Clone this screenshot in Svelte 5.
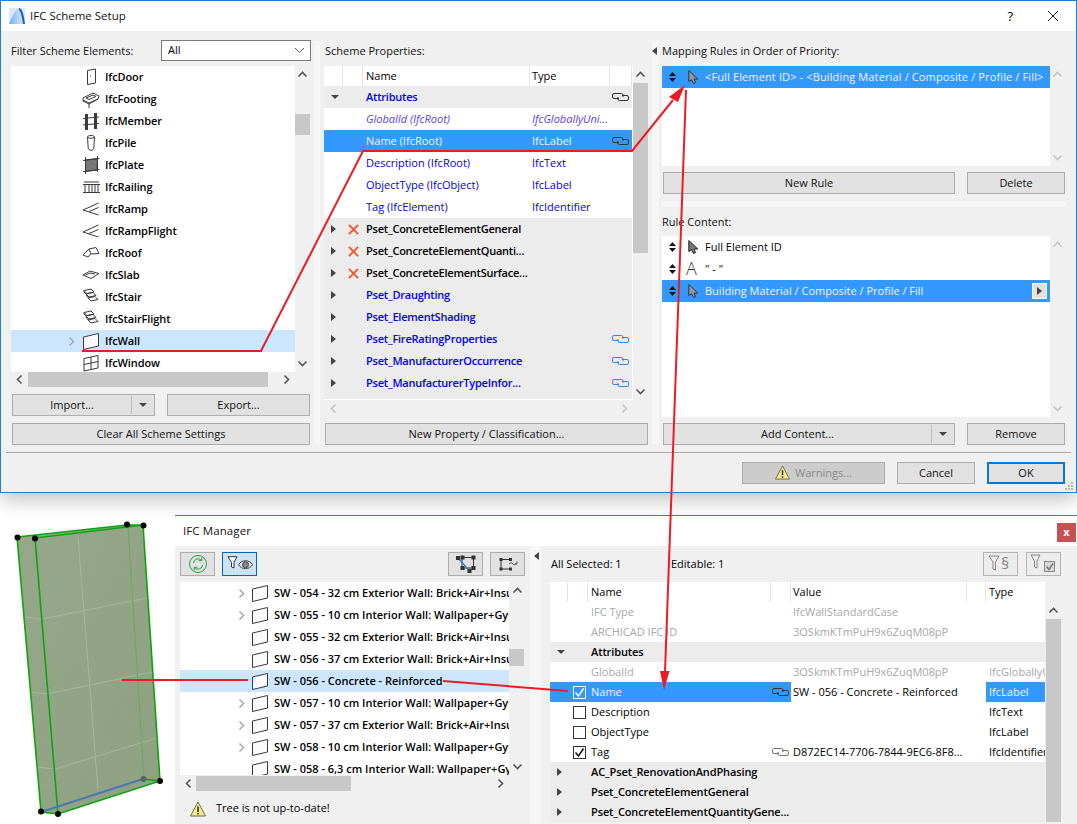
<script>
  // element list of the scheme dialog
  const elements = [
    ['IfcDoor', 'door'], ['IfcFooting', 'footing'], ['IfcMember', 'member'], ['IfcPile', 'pile'],
    ['IfcPlate', 'plate'], ['IfcRailing', 'railing'], ['IfcRamp', 'ramp'], ['IfcRampFlight', 'ramp'],
    ['IfcRoof', 'roof'], ['IfcSlab', 'slab'], ['IfcStair', 'stair'], ['IfcStairFlight', 'stair'],
    ['IfcWall', 'wall'], ['IfcWindow', 'window']
  ];

  const shapes = {
    door: [{ d: 'M5.5 2.5 13.5 1v14l-8 1.5z' }, { d: 'M8 8h1' }],
    footing: [{ d: 'M1 8 11 3l6 3-1 3-9 4-6-3z' }, { d: 'M4 8l7-3 3 1.5-7 3zM1 10v1l6 3 9-5M7 14v4' }],
    member: [{ d: 'M1 6.5 17 5M1 13l16-1.5' }, { d: 'M4.5 2v16M13.5 1v16', sw: 3 }],
    pile: [{ d: 'M5.5 3c0-2 7-2 7 0l-.7 11c-.3 3-5.300 3-5.600 0z' }, { d: 'M5.500 3.500c2 1 5 1 7 0' }],
    plate: [{ d: 'M3.500 4 15.500 2.500 15 14 3.500 15.500z', f: '#777' }, { d: 'M1 4.500 17.500 2.500M1 15.500 17.500 13.500M3.500 1v17M15.500 0v16' }],
    railing: [{ d: 'M2 4h15M1 6.500h17M3 6.500V14M7 6.500V14M10 6.500V14M13 6.500V14M16 6.500V14M1 14.500h17' }],
    ramp: [{ d: 'M16.500 3 1 10l15.500 5M7 11.500l9.500-4' }],
    roof: [{ d: 'M1 11 7 5l7-1.500 3 6-8.500.5-2.500 3z' }, { d: 'M9 10 7 5' }],
    slab: [{ d: 'M1 9 8 5l9 2.500-8 5z' }, { d: 'M3.500 9 8 7l5 1' }],
    stair: [{ d: 'M2 2.500 9 1l3 3-7 1.500zM4 6l7-1.500 3 3-7 1.500zM6 10l7-1.500 3 3-7 1.500zM2 2.500 2 4l3 3M4 7l3 4' }],
    wall: [{ d: 'M1.500 5 16.500 1.500V14L1.500 17.500z', f: '#fbfbfb' }],
    window: [{ d: 'M2 4.500 16 1.500V14L2 17zM9 3v12.500M2 10.500 16 7.500' }]
  };

  const schemeRows = [
    { name: 'Attributes', kind: 'group open', link: 'dark' },
    { name: 'GlobalId (IfcRoot)', type: 'IfcGloballyUni...', kind: 'req' },
    { name: 'Name (IfcRoot)', type: 'IfcLabel', kind: 'sel', link: 'dark' },
    { name: 'Description (IfcRoot)', type: 'IfcText', kind: 'attr' },
    { name: 'ObjectType (IfcObject)', type: 'IfcLabel', kind: 'attr' },
    { name: 'Tag (IfcElement)', type: 'IfcIdentifier', kind: 'attr' },
    { name: 'Pset_ConcreteElementGeneral', kind: 'group black', x: true },
    { name: 'Pset_ConcreteElementQuanti...', kind: 'group black', x: true },
    { name: 'Pset_ConcreteElementSurface...', kind: 'group black', x: true },
    { name: 'Pset_Draughting', kind: 'group' },
    { name: 'Pset_ElementShading', kind: 'group' },
    { name: 'Pset_FireRatingProperties', kind: 'group', link: 'blue' },
    { name: 'Pset_ManufacturerOccurrence', kind: 'group', link: 'blue' },
    { name: 'Pset_ManufacturerTypeInfor...', kind: 'group', link: 'blue' }
  ];

  const walls = [
    ['SW - 054 - 32 cm Exterior Wall: Brick+Air+Insulation', true],
    ['SW - 055 - 10 cm Interior Wall: Wallpaper+Gypsum', true],
    ['SW - 055 - 32 cm Exterior Wall: Brick+Air+Insulation', false],
    ['SW - 056 - 37 cm Exterior Wall: Brick+Air+Insulation', false],
    ['SW - 056 - Concrete - Reinforced', false, true],
    ['SW - 057 - 10 cm Interior Wall: Wallpaper+Gypsum', true],
    ['SW - 057 - 37 cm Exterior Wall: Brick+Air+Insulation', true],
    ['SW - 058 - 10 cm Interior Wall: Wallpaper+Gypsum', true],
    ['SW - 058 - 6,3 cm Interior Wall: Wallpaper+Gypsum', false]
  ];

  const managerRows = [
    { name: 'IFC Type', value: 'IfcWallStandardCase', kind: 'dim' },
    { name: 'ARCHICAD IFC ID', value: '3OSkmKTmPuH9x6ZuqM08pP', kind: 'dim' },
    { name: 'Attributes', kind: 'group', open: true },
    { name: 'GlobalId', value: '3OSkmKTmPuH9x6ZuqM08pP', type: 'IfcGloballyUniqueId', kind: 'dim' },
    { name: 'Name', value: 'SW - 056 - Concrete - Reinforced', type: 'IfcLabel', kind: 'sel', check: 'on', link: true },
    { name: 'Description', type: 'IfcText', check: 'off' },
    { name: 'ObjectType', type: 'IfcLabel', check: 'off' },
    { name: 'Tag', value: 'D872EC14-7706-7844-9EC6-8F8...', type: 'IfcIdentifier', check: 'on', link: true },
    { name: 'AC_Pset_RenovationAndPhasing', kind: 'group' },
    { name: 'Pset_ConcreteElementGeneral', kind: 'group' },
    { name: 'Pset_ConcreteElementQuantityGene...', kind: 'group' }
  ];
</script>

{#snippet chev(dir, cls = '')}
  <svg class="chev {dir} {cls}" width="11" height="11" viewBox="0 0 11 11"><path d="M1.500 7.500 5.500 3.500 9.500 7.500" /></svg>
{/snippet}

{#snippet vbar(top, height)}
  <div class="vbar">
    {@render chev('up')}
    <div class="thumb" style="top:{top}px;height:{height}px"></div>
    {@render chev('down')}
  </div>
{/snippet}

{#snippet hbar(left, width, dim)}
  <div class="hbar" class:dim>
    {@render chev('left')}
    {#if width}<div class="thumb" style="left:{left}px;width:{width}px"></div>{/if}
    {@render chev('right')}
  </div>
{/snippet}

{#snippet element(kind)}
  <svg class="eicon" width="18" height="18" viewBox="0 0 18 18">
    {#each shapes[kind] as s}
      <path d={s.d} fill={s.f ?? 'none'} stroke-width={s.sw ?? 1} />
    {/each}
  </svg>
{/snippet}

{#snippet link(tone)}
  <svg class="link {tone}" width="17" height="8" viewBox="0 0 17 8"><path d="M7 5.500H2A1.500 1.500 0 0 1 .5 4V2A1.500 1.500 0 0 1 2 .5H9.500A1.500 1.500 0 0 1 11 2V4M10 2.500H15A1.500 1.500 0 0 1 16.500 4V6A1.500 1.500 0 0 1 15 7.500H7.500A1.500 1.500 0 0 1 6 6V4" /></svg>
{/snippet}

{#snippet tri(dir)}
  <span class="tri {dir}"></span>
{/snippet}

{#snippet updown()}
  <svg class="updown" width="7" height="10" viewBox="0 0 7 10"><path d="M3.500 0 7 4H0zM0 6h7L3.500 10z" /></svg>
{/snippet}

{#snippet cursor()}
  <svg class="cursor" width="12" height="14" viewBox="0 0 12 14"><path d="M.8.5V11.500L3.500 9.800 5.500 13.500 7.500 12.700 6 9H9.800z" /></svg>
{/snippet}

{#snippet warn(size)}
  <svg width={size} height={size} viewBox="0 0 16 16"><path d="M8 1 15.500 15H.5z" fill="#f7e98a" stroke="#6d6a4a" /><path d="M8 5.500v5.500M8 12v1.500" stroke="#333" stroke-width="1.600" /></svg>
{/snippet}

<div class="page">
  <section class="setup">
    <header class="titlebar">
      <svg class="logo" width="16" height="16" viewBox="0 0 16 16">
        <defs>
          <linearGradient id="sail" x1="0" y1="0" x2="1" y2="0">
            <stop offset="0" stop-color="#6fb0f2" />
            <stop offset="1" stop-color="#d6e8fb" />
          </linearGradient>
        </defs>
        <rect width="16" height="16" fill="#dbe8f7" />
        <path d="M0 16C3 9 6 1 10 1 12 1 13 8 14 16z" fill="url(#sail)" />
        <path d="M10 1C12 1 14 8 15 16" fill="none" stroke="#1c5fb8" stroke-width="2" />
      </svg>
      <span class="wintitle">IFC Scheme Setup</span>
      <span class="help">?</span>
      <svg class="winclose" width="12" height="12" viewBox="0 0 12 12"><path d="M1 1l10 10M11 1 1 11" /></svg>
    </header>

    <div class="content">
      <div class="col col-filter">
        <div class="head">
          <span class="label">Filter Scheme Elements:</span>
          <div class="select"><span>All</span><svg width="11" height="7" viewBox="0 0 11 7"><path d="M1 1l4.500 4.500L10 1" /></svg></div>
        </div>
        <div class="listwrap filter-list">
          <div class="list">
            {#each elements as [name, kind]}
              <div class="erow" class:hi={name === 'IfcWall'}>
                {#if name === 'IfcWall'}{@render chev('right', 'pale')}{/if}
                {@render element(kind)}
                <b>{name}</b>
              </div>
            {/each}
          </div>
          {@render vbar(48, 21)}
        </div>
        {@render hbar(17, 240)}
        <div class="btnrow">
          <div class="btn split wide1"><span>Import...</span><i></i>{@render tri('down')}</div>
          <div class="btn wide1">Export...</div>
        </div>
        <div class="btn clear">Clear All Scheme Settings</div>
      </div>

      <div class="gutter plain"></div>

      <div class="col col-props">
        <div class="head"><span class="label shifted">Scheme Properties:</span></div>
        <div class="listwrap props-list">
          <div class="table">
            <div class="srow shead"><span></span><span></span><span>Name</span><span>Type</span><span></span></div>
            {#each schemeRows as r}
              <div class="srow {r.kind}">
                <span class="ar">
                  {#if r.kind.includes('open')}{@render tri('down')}{:else if r.kind.includes('group')}{@render tri('right')}{/if}
                </span>
                <span class="mk">
                  {#if r.x}<svg width="11" height="11" viewBox="0 0 12 12"><path d="M1 1l10 10M11 1 1 11" stroke="#f0552b" stroke-width="2" /></svg>{/if}
                </span>
                <span class="nm">{r.name}</span>
                <span class="ty">{r.type ?? ''}</span>
                <span class="lk">{#if r.link}{@render link(r.link)}{/if}</span>
              </div>
            {/each}
          </div>
          {@render vbar(17, 170)}
        </div>
        {@render hbar(0, 0, true)}
        <div class="btn newprop">New Property / Classification...</div>
      </div>

      <div class="gutter"><span class="tri left"></span></div>

      <div class="col col-rules">
        <div class="head"><span class="label">Mapping Rules in Order of Priority:</span></div>
        <div class="listwrap rules-list">
          <div class="list">
            <div class="rrow sel">{@render updown()}{@render cursor()}<span class="wide">&lt;Full Element ID&gt; - &lt;Building Material / Composite / Profile / Fill&gt;</span></div>
          </div>
          <div class="vbar faint">{@render chev('up')}{@render chev('down')}</div>
        </div>
        <div class="btnrow rulebtns">
          <div class="btn grow">New Rule</div>
          <div class="btn side">Delete</div>
        </div>
        <div class="strip"></div>
        <div class="label rc">Rule Content:</div>
        <div class="listwrap content-list">
          <div class="list">
            <div class="rrow">{@render updown()}{@render cursor()}<span>Full Element ID</span></div>
            <div class="rrow">{@render updown()}<span class="aicon">A</span><span>" - "</span></div>
            <div class="rrow sel">{@render updown()}{@render cursor()}<span>Building Material / Composite / Profile / Fill</span>
              <div class="more">{@render tri('right')}</div>
            </div>
          </div>
          <div class="vbar faint">{@render chev('up')}{@render chev('down')}</div>
        </div>
        <div class="btnrow rulebtns">
          <div class="btn grow split"><span>Add Content...</span><i></i>{@render tri('down')}</div>
          <div class="btn side">Remove</div>
        </div>
      </div>
    </div>

    <footer class="actions">
      <div class="btn act disabled warnbtn">{@render warn(15)}<span>Warnings...</span></div>
      <div class="btn act cancel">Cancel</div>
      <div class="btn act ok">OK</div>
      <svg class="grip" width="9" height="9" viewBox="0 0 9 9"><path d="M6 0h2v2H6zM3 3h2v2H3zM6 3h2v2H6zM0 6h2v2H0zM3 6h2v2H3zM6 6h2v2H6z" /></svg>
    </footer>
  </section>

  <div class="lower">
    <svg class="model" width="175" height="309" viewBox="0 515 175 309">
      <defs>
        <linearGradient id="conc" x1="0" y1="0" x2="1" y2="1">
          <stop offset="0" stop-color="#96a88a" />
          <stop offset="1" stop-color="#8da080" />
        </linearGradient>
        <filter id="mottle" x="0" y="0" width="1" height="1">
          <feTurbulence type="fractalNoise" baseFrequency="0.05 0.09" numOctaves="3" seed="4" />
          <feColorMatrix values="0 0 0 0 0.32  0 0 0 0 0.38  0 0 0 0 0.26  0.6 0 0 0 -0.22" />
          <feComposite in2="SourceGraphic" operator="in" />
        </filter>
      </defs>
      <path d="M17 537 127 525 143 525 160 781 58 814 41 812z" fill="url(#conc)" />
      <path d="M17 537 127 525 143 525 160 781 58 814 41 812z" fill="#000" filter="url(#mottle)" />
      <g class="joints">
        <path d="M25 617 42 619 147 598M32 692 47 694 152 672M38 767 55 769 157 738" />
        <path d="M78 537 98 790" />
      </g>
      <path class="backedge" d="M128 527 144 778" />
      <path class="edge" d="M17 537 127 525 143 525 160 781 58 814 41 812zM35 538 143 525M35 538 58 814M143 779 160 781" />
      <path class="baseline" d="M41 812 143 779" />
      <circle class="hidden-pt" cx="143.500" cy="779" r="3" />
      {#each [[17.500, 537.500], [35, 538.500], [127, 524.500], [143.500, 525.500], [160, 781], [41, 811.500], [58, 814]] as [cx, cy]}
        <circle {cx} {cy} r="3" />
      {/each}
    </svg>

    <section class="manager">
      <header class="mtitle">
        <span class="wintitle small">IFC Manager</span>
        <div class="mclose">x</div>
      </header>
      <div class="mbody">
        <div class="tree">
          <div class="tools">
            <div class="tool">
              <svg width="20" height="20" viewBox="0 0 20 20"><circle cx="10" cy="10" r="8.500" fill="none" stroke="#27a050" /><path d="M5.500 9a4.500 4.500 0 0 1 8-2.500M14.500 11a4.500 4.500 0 0 1-8 2.500M13.800 3.500v3.200h-3.200M6.200 16.500v-3.200h3.200" fill="none" stroke="#27a050" /></svg>
            </div>
            <div class="tool active">
              <svg width="30" height="18" viewBox="0 0 30 18"><path d="M3 1.700h9L9 7.500V13L6.500 12V7.500z" fill="#fff" stroke="#333" /><path d="M13.500 9.700c3-5.300 11-5.300 14 0-3 5.300-11 5.300-14 0z" fill="#d9e4ee" stroke="#444" /><circle cx="20.500" cy="9.700" r="3" fill="#888" stroke="#444" /></svg>
            </div>
            <div class="spacer"></div>
            <div class="tool">
              <svg width="22" height="20" viewBox="0 0 22 20"><path d="M7 3.500H18.500V14H7z" fill="none" stroke="#333" /><path d="M3 4 14.500 16.700" fill="none" stroke="#3b78d8" stroke-width="1.300" /><path d="M1 2h4v4H1zM5.500 1.500h4v4h-4zM16.500 1.500h4v4h-4zM5.500 12h4v4h-4zM16.500 12h4v4h-4zM12.500 15h4v4h-4z" fill="#333" /></svg>
            </div>
            <div class="tool">
              <svg width="22" height="18" viewBox="0 0 22 18"><path d="M4 4.500H13.500M4 4.500V14M4 14H13.500M13.500 4.500V6" fill="none" stroke="#333" /><path d="M2.500 3h3v3h-3zM12 3h3v3h-3zM2.500 12.500h3v3h-3zM12 12.500h3v3h-3z" fill="#333" /><path d="M12 9c1.500-1.500 3-1.500 4 0s2.500 1 4-.5M20 6.500V8.700H18" fill="none" stroke="#555" /></svg>
            </div>
          </div>
          <div class="listwrap tree-list">
            <div class="list">
              {#each walls as [label, expandable, hi]}
                <div class="wrow" class:hi>
                  <span class="slot">{#if expandable}{@render chev('right', 'pale')}{/if}</span>
                  {@render element('wall')}
                  <b>{label}</b>
                </div>
              {/each}
            </div>
            {@render vbar(67, 17)}
          </div>
          {@render hbar(16, 155)}
          <div class="notice">{@render warn(16)}<span>Tree is not up-to-date!</span></div>
        </div>

        <div class="gutter m"><span class="tri left"></span></div>

        <div class="props">
          <div class="summary">
            <span class="count">All Selected: 1</span>
            <span class="count">Editable: 1</span>
            <div class="spacer"></div>
            <div class="tool ghost">
              <svg width="28" height="20" viewBox="0 0 28 20"><path d="M2 2h10L8.500 8v8L6 15V8z" fill="none" stroke="#888" /><text x="14" y="15" class="sect">§</text></svg>
            </div>
            <div class="tool ghost">
              <svg width="28" height="20" viewBox="0 0 28 20"><path d="M1 1h9L7 7v7L4.500 13V7z" fill="none" stroke="#888" /><rect x="14.500" y="7.500" width="10" height="10" fill="#d8d8d8" stroke="#888" /><path d="M16.500 12.500l2.500 3 4-6" fill="none" stroke="#777" stroke-width="1.500" /></svg>
            </div>
          </div>
          <div class="ptable">
            <div class="pgrid">
              <div class="prow phead"><span></span><span></span><span class="nm">Name</span><span></span><span class="val">Value</span><span></span><span class="ty">Type</span></div>
              {#each managerRows as r}
                <div class="prow {r.kind ?? ''}">
                  <span class="ar">
                    {#if r.kind === 'group'}{@render tri(r.open ? 'down' : 'right')}{/if}
                  </span>
                  <span class="ck">
                    {#if r.check}
                      <span class="box">{#if r.check === 'on'}<svg width="11" height="11" viewBox="0 0 11 11"><path d="M1.500 5.500 4.500 9 9.500 1.500" /></svg>{/if}</span>
                    {/if}
                  </span>
                  <span class="nm">{r.name}</span>
                  <span class="lk">{#if r.link}{@render link(r.kind === 'sel' ? 'dark' : 'grey')}{/if}</span>
                  <span class="val">{r.value ?? ''}</span>
                  <span class="val2"></span>
                  <span class="ty">{r.type ?? ''}</span>
                </div>
              {/each}
            </div>
            <div class="pscroll">
              {@render chev('up')}
              <div class="thumb tall"></div>
            </div>
          </div>
        </div>
      </div>
    </section>
  </div>

  <svg class="notes" width="1077" height="824" viewBox="0 0 1077 824">
    <path d="M82 351H261L363 151H632L673 100" />
    <path d="M686 90 665 672" />
    <path d="M122 680H248M443 681 568 691" />
    <path class="head" d="M685 85 669 97 678 102zM664 690 660 671H669.500z" />
  </svg>
</div>

<style>
  :global(body) {
    margin: 0;
    background: #fff;
  }
  .page {
    position: relative;
    width: 1077px;
    height: 824px;
    overflow: hidden;
    background: #fff;
    font-family: "Open Sans", "Noto Sans", sans-serif;
    font-size: 11px;
    color: #000;
  }
  .setup {
    position: relative;
    z-index: 1;
    box-sizing: border-box;
    height: 493px;
    border: 1px solid #1b7fd3;
    background: #f0f0f0;
    box-shadow: 0 8px 18px rgba(0, 0, 0, 0.22);
  }
  .titlebar {
    display: flex;
    align-items: center;
    height: 30px;
    padding: 0 17px 0 8px;
    background: #fff;
  }
  .logo { margin-right: 5px; }
  .wintitle { font-size: 11.500px; color: #111; padding-bottom: 2px; }
  .wintitle.small { letter-spacing: 0.1px; }
  .help { margin-left: auto; margin-right: 34px; font-size: 13px; }
  .winclose path { stroke: #222; fill: none; }

  .content {
    display: flex;
    height: 422px;
    box-sizing: border-box;
    border-bottom: 1px solid #a8a8a8;
    margin: 0 5px;
  }
  .col { display: flex; flex-direction: column; }
  .col-filter { width: 300px; margin-left: 5px; }
  .col-props { width: 325px; margin-right: 3px; }
  .col-rules { width: 404px; margin-left: 3px; }
  .head {
    display: flex;
    align-items: center;
    justify-content: space-between;
    height: 21px;
    margin-top: 9px;
    margin-bottom: 5px;
  }
  .label { color: #111; }
  .label.shifted { margin-left: 1px; }
  .select {
    box-sizing: border-box;
    display: flex;
    align-items: center;
    justify-content: space-between;
    width: 150px;
    height: 21px;
    padding: 0 5px 0 6px;
    background: #fff;
    border: 1px solid #7a7a7a;
  }
  .select span { padding-bottom: 2px; }
  .select path { fill: none; stroke: #555; }

  .listwrap { display: flex; }
  .list { flex: 1; background: #fff; overflow: hidden; }
  .filter-list { height: 306px; margin-right: 1px; }
  .props-list { height: 334px; }
  .rules-list { height: 100px; margin-right: 1px; }
  .content-list { height: 181px; margin-right: 1px; }

  .vbar {
    position: relative;
    display: flex;
    flex-direction: column;
    justify-content: space-between;
    align-items: center;
    width: 15px;
    flex: none;
    padding: 3px 0;
    box-sizing: border-box;
    background: #f0f0f0;
  }
  .hbar {
    position: relative;
    display: flex;
    justify-content: space-between;
    align-items: center;
    height: 15px;
    padding: 0 3px;
    margin-right: 16px;
    flex: none;
  }
  .col-props .hbar { height: 16px; margin-right: 15px; padding: 0 4px; }
  .thumb { position: absolute; background: #c8c8c8; }
  .vbar .thumb { left: 0; width: 15px; }
  .hbar .thumb { top: 0; height: 15px; }
  .chev { flex: none; }
  .chev path { fill: none; stroke: #555; stroke-width: 1.600; }
  .chev.down { transform: rotate(180deg); }
  .chev.left { transform: rotate(-90deg); }
  .chev.right { transform: rotate(90deg); }
  .chev.pale path { stroke: #a8a8a8; stroke-width: 1.500; }
  .hbar.dim .chev path, .faint .chev path { stroke: #c4c4c4; }

  .erow, .wrow {
    display: flex;
    align-items: center;
    height: 22px;
    white-space: nowrap;
  }
  .erow { padding-left: 71px; }
  .erow.hi { padding-left: 55px; background: #cce6ff; }
  .erow.hi .chev { margin-right: 5px; }
  .erow b, .wrow b { font-weight: 600; margin-left: 5px; padding-bottom: 2px; }
  .erow b { letter-spacing: -0.1px; }
  .eicon { flex: none; }
  .eicon path { stroke: #3a3a3a; }

  .btn {
    box-sizing: border-box;
    display: flex;
    align-items: center;
    justify-content: center;
    height: 22px;
    padding-bottom: 2px;
    background: #e1e1e1;
    border: 1px solid #adadad;
    color: #111;
    white-space: nowrap;
  }
  .btnrow { display: flex; justify-content: space-between; margin: 7px 1px 0 1px; }
  .wide1 { width: 143px; }
  .clear { margin: 7px 1px 0 1px; }
  .split span:first-child { flex: 1; text-align: center; }
  .split i { width: 1px; height: 18px; margin-top: 2px; background: #bdbdbd; margin-right: 7px; }
  .split .tri { margin-right: 7px; margin-top: 2px; }
  .tri { display: inline-block; width: 0; height: 0; border-style: solid; border-color: transparent; }
  .tri.down { border-width: 4px 4px 0 4px; border-top-color: #444; }
  .tri.right { border-width: 4px 0 4px 5px; border-left-color: #444; }
  .tri.left { border-width: 4px 5px 4px 0; border-right-color: #444; }

  .col-props .table { width: 309px; background: #ececec; border-right: 1px solid #fff; border-bottom: 1px solid #fff; box-sizing: border-box; flex: none; }
  .srow {
    display: grid;
    grid-template-columns: 19px 20px 167px 80px 22px;
    align-items: center;
    height: 22px;
    white-space: nowrap;
  }
  .srow > span { overflow: hidden; display: flex; align-items: center; box-sizing: border-box; }
  .srow .nm { padding: 0 0 2px 3px; }
  .srow .ty { padding: 0 0 2px 2px; }
  .srow .ar { padding-left: 7px; }
  .srow .mk { padding-left: 5px; }
  .srow .lk { padding-left: 2px; }
  .srow.group .nm { letter-spacing: -0.22px; overflow: visible; }
  .shead { height: 20px; background: #fff; }
  .shead span { height: 20px; border-right: 1px solid #e4e4e4; padding-bottom: 2px; }
  .shead span:nth-child(3) { padding-left: 3px; }
  .shead span:nth-child(4) { padding-left: 2px; }
  .group { font-weight: 600; color: #0000f0; }
  .group.black { color: #000; }
  .attr { background: #fff; color: #0000e6; }
  .req { background: #fff; color: #5b3ee0; font-style: italic; }
  .sel { background: #3399ff; color: #f4f2ff; }
  .newprop { margin: 7px 1px 0 1px; }

  .link path { fill: none; stroke-width: 1; }
  .link.dark path { stroke: #333; }
  .link.blue path { stroke: #2a8cf0; }
  .link.grey path { stroke: #777; }

  .gutter { width: 7px; background: #f6f6f6; margin-top: 10px; margin-bottom: 8px; position: relative; }
  .gutter.plain { width: 6px; margin-left: 3px; margin-right: 4px; }
  .gutter .tri { position: absolute; left: 0; top: 6px; }

  .rrow {
    display: flex;
    align-items: center;
    height: 22px;
    padding-left: 7px;
    white-space: nowrap;
    position: relative;
  }
  .rrow > span { padding-bottom: 2px; }
  .rrow .wide { letter-spacing: 0.13px; }
  .updown { margin-right: 10px; }
  .updown path { fill: #111; }
  .cursor { margin-left: 2px; margin-right: 5px; }
  .cursor path { fill: #777; stroke: #222; stroke-width: 1; }
  .rrow.sel .cursor path { fill: #8f97a3; stroke: #333; }
  .aicon { font-size: 18px; font-weight: 300; width: 19px; line-height: 18px; color: #333; }
  .more {
    position: absolute;
    right: 3px;
    top: 3px;
    width: 15px;
    height: 16px;
    box-sizing: border-box;
    background: #e1e1e1;
    border: 1px solid #fff;
    display: flex;
    align-items: center;
    justify-content: center;
  }
  .rulebtns { margin: 6px 0 0 1px; }
  .grow { width: 292px; }
  .side { width: 98px; margin-right: 1px; }
  .strip { height: 6px; background: #f6f6f6; margin-top: 7px; }
  .rc { height: 20px; margin-top: 5px; margin-bottom: 4px; line-height: 20px; box-sizing: border-box; }

  .actions {
    display: flex;
    justify-content: flex-end;
    gap: 12px;
    padding: 9px 11px 0 0;
    position: relative;
  }
  .act { width: 78px; }
  .warnbtn { width: 143px; background: #ccc; color: #888; gap: 5px; }
  .ok { border: 2px solid #0078d7; }
  .grip { position: absolute; right: 2px; top: 29px; }
  .grip path { fill: #b4b4b4; }

  .lower {
    display: flex;
    height: 309px;
    margin-top: 22px;
  }
  .model { flex: none; }
  .model circle { fill: #000; }
  .model circle.hidden-pt { fill: #4d6d5a; }
  .joints path { fill: none; stroke: #a7b69b; stroke-width: 1; }
  .backedge { fill: none; stroke: #6aab60; stroke-width: 1.200; }
  .edge { fill: none; stroke: #0ca50c; stroke-width: 1.600; }
  .baseline { fill: none; stroke: #4a78b0; stroke-width: 2; }

  .manager { flex: 1; display: flex; flex-direction: column; border-top: 1px solid #2a80d0; }
  .mtitle { display: flex; height: 30px; justify-content: space-between; align-items: center; padding-left: 8px; background: #fff; }
  .mclose {
    width: 19px;
    height: 19px;
    margin-top: 3px;
    margin-right: 1px;
    background: #c75050;
    color: #fff;
    text-align: center;
    font-weight: 700;
    line-height: 17px;
  }
  .mbody { flex: 1; display: flex; background: #f0f0f0; min-height: 0; }
  .tree { width: 355px; box-sizing: border-box; padding: 6px 5px 0; flex: none; }
  .tools { display: flex; gap: 7px; height: 24px; margin-bottom: 6px; }
  .spacer { flex: 1; }
  .tool {
    box-sizing: border-box;
    width: 35px;
    height: 24px;
    display: flex;
    align-items: center;
    justify-content: center;
    background: #e1e1e1;
    border: 1px solid #adadad;
  }
  .tool.active { background: #cce4f7; border-color: #0a64b4; }
  .tool.ghost { background: #ececec; border-color: #b4b4b4; }
  .sect { font-size: 16px; fill: #888; font-family: "Open Sans", sans-serif; }
  .tree-list { height: 193px; }
  .tree .vbar { width: 16px; }
  .tree .vbar .thumb { width: 15px; }
  .tree .hbar { margin-right: 16px; margin-top: 1px; }
  .wrow.hi { background: #cce6ff; }
  .slot { width: 71px; flex: none; display: flex; justify-content: flex-end; padding-right: 4px; box-sizing: border-box; }
  .notice { display: flex; align-items: center; gap: 10px; padding: 9px 0 0 10px; }
  .notice span { padding-bottom: 2px; }

  .gutter.m { width: 11px; margin: 0; flex: none; }
  .gutter.m .tri { left: 4px; top: 6px; }

  .props { flex: 1; padding: 6px 16px 0 9px; min-width: 0; }
  .summary { display: flex; gap: 8px; height: 24px; margin-bottom: 6px; align-items: center; }
  .count { width: 112px; padding-bottom: 2px; }
  .count:first-child { margin-left: 1px; }
  .ptable { display: flex; }
  .pgrid { width: 495px; flex: none; overflow: hidden; }
  .prow {
    display: grid;
    grid-template-columns: 18px 20px 183px 20px 176px 19px 59px;
    align-items: center;
    height: 20px;
    white-space: nowrap;
    background: #fff;
  }
  .prow > span { overflow: hidden; height: 20px; display: flex; align-items: center; box-sizing: border-box; }
  .prow .nm { padding: 0 0 2px 3px; }
  .prow .val { padding: 0 0 2px 2px; }
  .prow .ty { padding: 0 0 2px 3px; }
  .prow .ar { padding-left: 7px; }
  .prow .lk { justify-content: flex-end; padding-right: 2px; }
  .phead > span { border-right: 1px solid #e4e4e4; }
  .phead > span:last-child { border-right: 0; }
  .prow.dim { color: #a8a8a8; }
  .prow.group { background: #ececec; color: #000; }
  .prow.group .nm { overflow: visible; letter-spacing: -0.12px; }
  .prow.sel { background: #3399ff; color: #f4f2ff; }
  .prow.sel .val, .prow.sel .val2 { background: #fff; color: #000; }
  .box {
    width: 13px;
    height: 13px;
    box-sizing: border-box;
    border: 1px solid #333;
    display: flex;
    align-items: center;
    justify-content: center;
    background: #fff;
  }
  .ck { padding-left: 5px; }
  .box path { fill: none; stroke: #111; stroke-width: 1.500; }
  .sel .box { background: #3399ff; border-color: #fff; }
  .sel .box path { stroke: #fff; }
  .pscroll { position: relative; width: 15px; margin-left: 1px; margin-top: 20px; display: flex; justify-content: center; padding-top: 3px; box-sizing: border-box; align-items: flex-start; }
  .thumb.tall { left: 0; top: 17px; bottom: 0; width: 15px; }

  .notes { position: absolute; inset: 0; z-index: 5; pointer-events: none; }
  .notes path { fill: none; stroke: #ed1c24; stroke-width: 2; }
  .notes path.head { fill: #ed1c24; stroke: none; }
</style>
